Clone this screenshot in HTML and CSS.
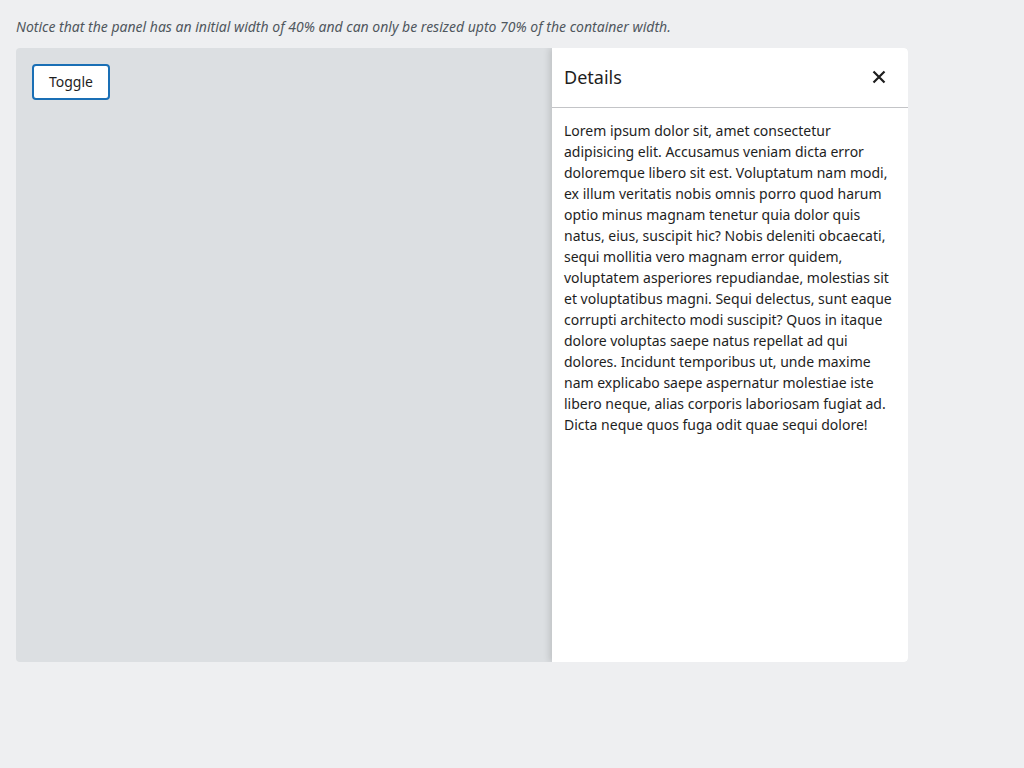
FILE: index.html
```html
<!DOCTYPE html>
<html>
<head>
<meta charset="utf-8">
<link rel="stylesheet" href="styles.css">
</head>
<body>
<p class="notice">Notice that the panel has an initial width of 40% and can only be resized upto 70% of the container width.</p>
<div class="container">
  <div class="main">
    <button class="toggle">Toggle</button>
  </div>
  <aside class="panel">
    <div class="panel-header">
      <h2 class="panel-title">Details</h2>
      <button class="close" aria-label="Close">
        <svg width="24" height="24" viewBox="0 0 24 24"><path d="M6.5 6.5l11 11M17.5 6.5l-11 11" stroke="#1e1e1e" stroke-width="2.2" fill="none"/></svg>
      </button>
    </div>
    <div class="panel-body">Lorem ipsum dolor sit, amet consectetur adipisicing elit. Accusamus veniam dicta error doloremque libero sit est. Voluptatum nam modi, ex illum veritatis nobis omnis porro quod harum optio minus magnam tenetur quia dolor quis natus, eius, suscipit hic? Nobis deleniti obcaecati, sequi mollitia vero magnam error quidem, voluptatem asperiores repudiandae, molestias sit et voluptatibus magni. Sequi delectus, sunt eaque corrupti architecto modi suscipit? Quos in itaque dolore voluptas saepe natus repellat ad qui dolores. Incidunt temporibus ut, unde maxime nam explicabo saepe aspernatur molestiae iste libero neque, alias corporis laboriosam fugiat ad. Dicta neque quos fuga odit quae sequi dolore!</div>
  </aside>
</div>
</body>
</html>
```
FILE: styles.css
```css
html, body {
  margin: 0;
  background: #eeeff1;
}
body {
  padding: 16px 16px;
  font-family: "Noto Sans", sans-serif;
  color: #1e1e1e;
}
.notice {
  margin: 0 0 10px;
  font-size: 14px;
  line-height: 22px;
  font-style: italic;
  color: #50575e;
}
.container {
  display: flex;
  width: 892px;
  height: 614px;
  background: #dcdfe2;
  border-radius: 4px;
  overflow: hidden;
}
.main {
  flex: 1;
  padding: 16px;
}
.toggle {
  font-family: "Noto Sans", sans-serif;
  font-size: 14px;
  line-height: 20px;
  color: #1e1e1e;
  background: #fff;
  border: 2px solid #1a6fb5;
  border-radius: 4px;
  width: 78px;
  height: 36px;
  padding: 0;
  cursor: pointer;
}
.panel {
  width: 356px;
  background: #fff;
  display: flex;
  flex-direction: column;
  box-shadow: -3px 0 6px rgba(0,0,0,0.12);
  position: relative;
}
.panel-header {
  display: flex;
  align-items: center;
  justify-content: space-between;
  height: 60px;
  box-sizing: border-box;
  padding: 0 17px 1px 12px;
  border-bottom: 1px solid #c3c4c7;
}
.panel-title {
  margin: 0;
  font-size: 18px;
  font-weight: 400;
  line-height: 24px;
}
.close {
  background: none;
  border: 0;
  padding: 0;
  width: 24px;
  height: 24px;
  display: flex;
  cursor: pointer;
}
.panel-body {
  padding: 12px 16px 12px 12px;
  font-size: 14px;
  line-height: 21px;
}
```
